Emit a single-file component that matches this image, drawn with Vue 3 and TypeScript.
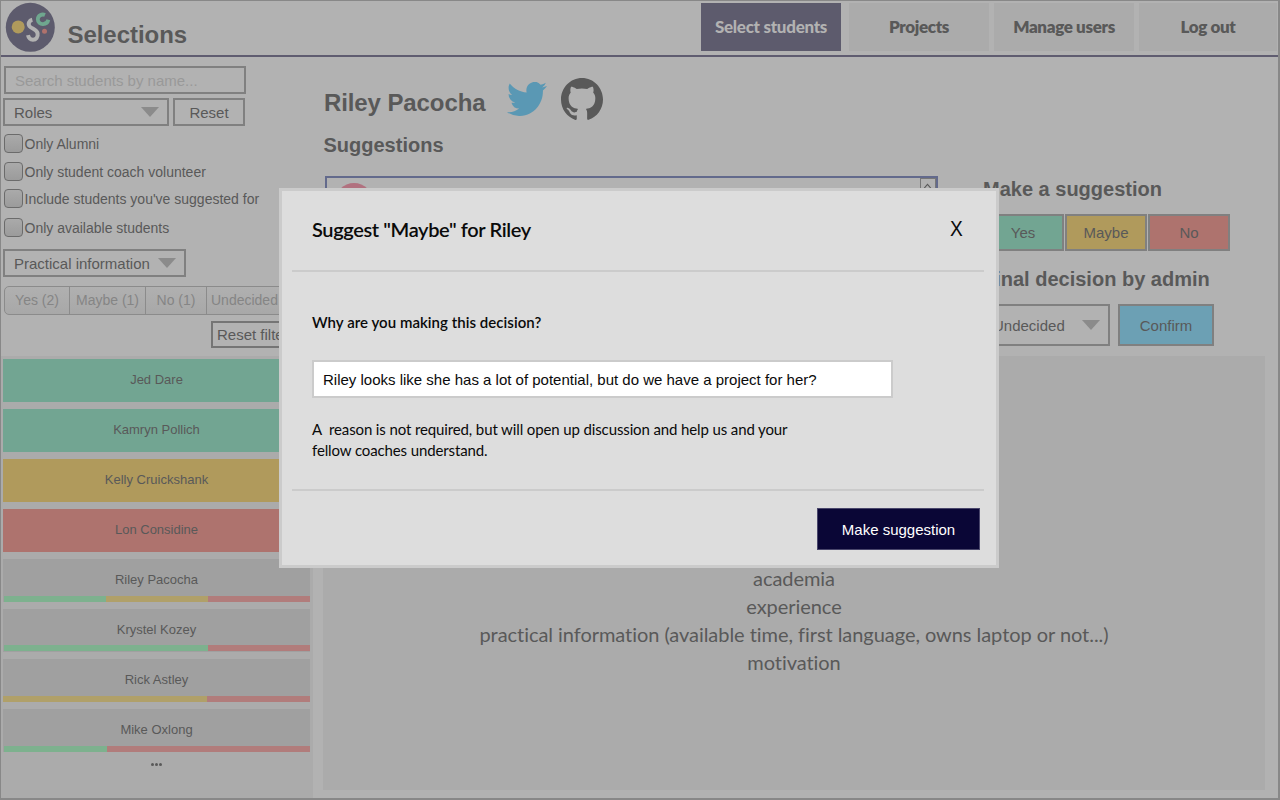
<script setup lang="ts">
interface Bar { tone: 'yes' | 'maybe' | 'no'; share: number }
interface Student { name: string; decision?: 'yes' | 'maybe' | 'no'; bars?: Bar[] }

const tabs = ['Select students', 'Projects', 'Manage users', 'Log out']
const filters = ['Only Alumni', 'Only student coach volunteer', "Include students you've suggested for", 'Only available students']
const counts = ['Yes (2)', 'Maybe (1)', 'No (1)', 'Undecided (4)']
const students: Student[] = [
  { name: 'Jed Dare', decision: 'yes' },
  { name: 'Kamryn Pollich', decision: 'yes' },
  { name: 'Kelly Cruickshank', decision: 'maybe' },
  { name: 'Lon Considine', decision: 'no' },
  { name: 'Riley Pacocha', bars: [{ tone: 'yes', share: 102 }, { tone: 'maybe', share: 102 }, { tone: 'no', share: 102 }] },
  { name: 'Krystel Kozey', bars: [{ tone: 'yes', share: 204 }, { tone: 'no', share: 102 }] },
  { name: 'Rick Astley', bars: [{ tone: 'maybe', share: 204 }, { tone: 'no', share: 103 }] },
  { name: 'Mike Oxlong', bars: [{ tone: 'yes', share: 103 }, { tone: 'no', share: 203 }] },
]
const details = ['academia', 'experience', 'practical information (available time, first language, owns laptop or not...)', 'motivation']
</script>

<template>
  <div class="screen">
    <header class="top">
      <svg class="logo" viewBox="0 0 50 50">
        <circle cx="25.300" cy="25.300" r="24.500" fill="#5d5b6d" />
        <circle cx="13.200" cy="24.900" r="6.500" fill="#b09a5c" />
        <circle cx="39.500" cy="29.200" r="2.500" fill="#b0726c" />
        <path d="M27.300 17.800c-3 .8-4.700 4-2.700 6.600 1.900 2.400 7.300 2.800 8 7 .6 3.700-1.600 6.300-4.700 6.300-2.800 0-4.300-1.700-4.900-4.500" fill="none" stroke="#b2b2b2" stroke-width="4" />
        <path d="M40 13c-3.200-1.400-7.200.6-7.200 4.300 0 2.900 2.500 5 5.300 4.800 2.700-.1 4.700-1.800 5.300-4.300" fill="none" stroke="#6fa78f" stroke-width="3.800" />
      </svg>
      <h1>Selections</h1>
      <nav>
        <button v-for="(tab, i) in tabs" :key="tab" :class="['tab', { active: i === 0 }]">{{ tab }}</button>
      </nav>
    </header>

    <div class="body">
      <aside>
        <section class="filters">
          <div class="search">Search students by name...</div>
          <div class="row">
            <div class="select roles"><span>Roles</span><i class="arrow" /></div>
            <div class="reset">Reset</div>
          </div>
          <div class="checks">
            <div v-for="f in filters" :key="f" class="check"><i class="box" /><span>{{ f }}</span></div>
          </div>
          <div class="select practical"><span>Practical information</span><i class="arrow" /></div>
          <div class="counts"><span v-for="c in counts" :key="c">{{ c }}</span></div>
          <div class="reset-filters">Reset filters</div>
        </section>
        <section class="list">
          <div v-for="s in students" :key="s.name" :class="['student', s.decision]">
            <span class="name">{{ s.name }}</span>
            <div v-if="s.bars" :class="['bars', { raised: s.name === 'Krystel Kozey' }]">
              <i v-for="b in s.bars" :key="b.tone" :class="b.tone" :style="{ width: b.share + 'px' }" />
            </div>
          </div>
          <div class="more"><i /><i /><i /></div>
        </section>
      </aside>

      <main>
        <div class="person">
          <h2>Riley Pacocha</h2>
          <svg class="twitter" viewBox="0 2.250 24 19.500" preserveAspectRatio="none"><path fill="#5a98b4" d="M23.953 4.570a10 10 0 01-2.825.775 4.958 4.958 0 002.163-2.723c-.951.555-2.005.959-3.127 1.184a4.920 4.920 0 00-8.384 4.482C7.690 8.095 4.067 6.130 1.640 3.162a4.822 4.822 0 00-.666 2.475c0 1.710.870 3.213 2.188 4.096a4.904 4.904 0 01-2.228-.616v.060a4.923 4.923 0 003.946 4.827 4.996 4.996 0 01-2.212.085 4.936 4.936 0 004.604 3.417 9.867 9.867 0 01-6.102 2.105c-.390 0-.779-.023-1.170-.067a13.995 13.995 0 007.557 2.209c9.053 0 13.998-7.496 13.998-13.985 0-.210 0-.420-.015-.630A9.935 9.935 0 0024 4.590z" /></svg>
          <svg class="github" viewBox="0 .297 24 23.450" preserveAspectRatio="none"><path fill="#595959" d="M12 .297c-6.630 0-12 5.373-12 12 0 5.303 3.438 9.800 8.205 11.385.600.113.820-.258.820-.577 0-.285-.010-1.040-.015-2.040-3.338.724-4.042-1.610-4.042-1.610C4.422 18.070 3.633 17.700 3.633 17.700c-1.087-.744.084-.729.084-.729 1.205.084 1.838 1.236 1.838 1.236 1.070 1.835 2.809 1.305 3.495.998.108-.776.417-1.305.760-1.605-2.665-.300-5.466-1.332-5.466-5.930 0-1.310.465-2.380 1.235-3.220-.135-.303-.540-1.523.105-3.176 0 0 1.005-.322 3.300 1.230.960-.267 1.980-.399 3-.405 1.020.006 2.040.138 3 .405 2.280-1.552 3.285-1.230 3.285-1.230.645 1.653.240 2.873.120 3.176.765.840 1.230 1.910 1.230 3.220 0 4.610-2.805 5.625-5.475 5.920.420.360.810 1.096.810 2.220 0 1.606-.015 2.896-.015 3.286 0 .315.210.690.825.570C20.565 22.092 24 17.592 24 12.297c0-6.627-5.373-12-12-12" /></svg>
        </div>
        <div class="columns">
          <div class="left">
            <h3>Suggestions</h3>
            <div class="suggestions">
              <i class="avatar" />
              <i class="scroll"><svg viewBox="0 0 16 14"><path d="M4 9.500 8 5l4 4.500" fill="none" stroke="#595959" stroke-width="1.300" /></svg></i>
            </div>
          </div>
          <div class="right">
            <h3>Make a suggestion</h3>
            <div class="votes"><button class="yes">Yes</button><button class="maybe">Maybe</button><button class="no">No</button></div>
            <h3 class="final">Final decision by admin</h3>
            <div class="decide">
              <div class="select undecided"><span>Undecided</span><i class="arrow" /></div>
              <button class="confirm">Confirm</button>
            </div>
          </div>
        </div>
        <div class="details"><p v-for="d in details" :key="d">{{ d }}</p></div>
      </main>
    </div>

    <div class="modal">
      <div class="modal-head"><h4>Suggest "Maybe" for Riley</h4><span class="close">X</span></div>
      <div class="modal-body">
        <p class="question">Why are you making this decision?</p>
        <div class="answer">Riley looks like she has a lot of potential, but do we have a project for her?</div>
        <p class="hint">A&nbsp; reason is not required, but will open up discussion and help us and your<br />fellow coaches understand.</p>
      </div>
      <div class="modal-foot"><button class="submit">Make suggestion</button></div>
    </div>
  </div>
</template>

<style>
body { margin: 0; overflow: hidden; }
</style>

<style scoped>
* { box-sizing: border-box; }
.screen { position: relative; width: 1280px; height: 800px; overflow: hidden; background: #b2b2b2; border: solid #888; border-width: 1px 2px 2px 1px; font-family: "Liberation Sans", Arial, sans-serif; font-size: 15px; color: #595959; white-space: nowrap; font-variant-ligatures: none; }
h1, h2, h3, h4, p { margin: 0; }
button { font: inherit; color: inherit; padding: 0; border: 0; border-radius: 0; font-variant-ligatures: none; }
i { display: block; }

.top { display: flex; height: 56px; border-bottom: 2px solid #5f5c70; }
.logo { width: 50px; height: 50px; margin: 1px 0 0 4px; }
h1 { margin: 20px 0 0 12.500px; font-size: 24px; line-height: 28px; letter-spacing: -.05px; }
nav { display: flex; margin: 2px 1px 0 auto; }
.tab { width: 140px; height: 48px; margin-right: 5px; background: #ababab; font: 800 17px/48px Lato, sans-serif; letter-spacing: -.35px; }
.tab:last-child { width: 138px; margin: 0; }
.tab.active { margin-right: 8px; background: #5d5b6d; color: #b2b2b2; font-weight: 900; letter-spacing: -.28px; }

.body { display: flex; height: 741px; }
aside { width: 312px; flex: none; }
.filters { height: 299px; padding: 9px 0 0 2px; overflow: hidden; }
.search { width: 242px; height: 28px; margin-left: 1px; border: 2px solid #808080; padding-left: 9px; line-height: 26px; color: #999; }
.row { display: flex; gap: 4px; margin-top: 4px; }
.select { display: flex; align-items: center; justify-content: space-between; border: 2px solid #808080; height: 28px; padding: 0 8px 0 9px; }
.roles { width: 166px; }
.reset { width: 72px; height: 28px; border: 2px solid #808080; text-align: center; line-height: 25px; }
.arrow { width: 18px; height: 10px; background: #8b8b8b; clip-path: polygon(0 0, 100% 0, 50% 100%); }
.checks { height: 115px; padding: 8px 0 0 1px; font-size: 14px; }
.check { display: flex; align-items: center; gap: 1.500px; height: 19px; margin-bottom: 9px; }
.check:nth-child(2) { margin-bottom: 8px; }
.check:nth-child(3) { margin-bottom: 10px; }
.box { width: 19px; height: 19px; border: 1.500px solid #6b6b6b; border-radius: 4px; background: linear-gradient(#aaa, #9b9b9b); }
.practical { width: 183px; margin-top: 8px; }
.counts { display: flex; width: 330px; height: 29px; margin: 9px 0 0 1px; border: 1px solid #8b8b8b; border-radius: 5px; color: #858585; font-size: 14px; line-height: 27px; text-align: center; background: linear-gradient(#b0b0b0, #a8a8a8); }
.counts span { border-right: 1px solid #8b8b8b; width: 65px; }
.counts span:nth-child(2) { width: 76px; }
.counts span:nth-child(3) { width: 61px; }
.counts span:nth-child(4) { border: 0; width: auto; padding-left: 4px; }
.reset-filters { width: 95px; height: 27px; margin: 6px 0 0 208px; border: 2px solid #757575; padding-left: 4px; line-height: 24px; }

.list { height: 442px; padding: 3px 3px 0 2px; background: #ababab; }
.student { display: flex; flex-direction: column; justify-content: space-between; height: 43px; margin-bottom: 7px; background: #a0a0a0; text-align: center; font-size: 13px; }
.name { height: 37px; padding-top: 1px; line-height: 40px; }
.bars { display: flex; height: 6px; justify-content: flex-end; }
.bars.raised { margin: -1px 0 1px; }
.student.yes, .votes .yes { background: #72a592; }
.student.maybe, .votes .maybe { background: #b09a5c; }
.student.no, .votes .no { background: #ae736e; }
.bars .yes { background: #7db18e; }
.bars .maybe { background: #b0a069; }
.bars .no { background: #b17c7b; }
.more { display: flex; justify-content: center; gap: 1px; margin-top: 11px; }
.more i { width: 3.300px; height: 3.300px; background: #595959; border-radius: 50%; }

main { width: 954px; padding: 21px 0 0 10px; flex: none; }
.person { display: flex; height: 42px; padding-left: 1px; }
h2 { width: 161px; margin: 11px 22px 0 0; font-size: 24px; line-height: 28px; letter-spacing: -.1px; }
.twitter { width: 40px; height: 34px; margin-top: 4px; }
.github { width: 42px; height: 42px; margin-left: 14px; }
.columns { display: flex; height: 236px; }
.left { width: 659px; padding-top: 13px; }
h3 { padding-left: 1px; font-size: 20px; line-height: 24px; }
.left h3 { padding-left: .5px; }
.suggestions { display: flex; justify-content: space-between; width: 613px; height: 150px; margin: 19px 0 0 2px; border: 2px solid #636a8c; }
.avatar { width: 38px; height: 38px; margin: 5px 0 0 8px; border-radius: 50%; background: #b1717f; }
.scroll { width: 16px; height: 16px; border: 1.500px solid #777; }
.scroll svg { display: block; width: 13px; height: 14px; }
.right { padding-top: 57px; }
.votes { display: flex; gap: 1px; margin-top: 13px; }
.votes button { width: 82px; height: 37px; border: 2px solid #808080; }
.final { margin-top: 16px; }
.decide { display: flex; gap: 8px; margin-top: 13px; }
.undecided { width: 128px; height: 42px; padding: 0 8px 0 9px; }
.confirm { width: 96px; height: 42px; background: #6ca0b4; border: 2px solid #808080; }
.details { width: 942px; height: 434px; padding-top: 208px; background: #ababab; text-align: center; font: 20px/28px Lato, sans-serif; letter-spacing: -.05px; font-variant-ligatures: none; }

.modal { position: absolute; left: 278px; top: 187px; width: 720px; height: 380px; padding: 0 12px 0 10px; border: 3px solid #cbcbcb; background: #ddd; color: #0a0a0a; }
.modal-head { display: flex; justify-content: space-between; height: 81px; padding: 0 20px; border-bottom: 2px solid #cbcbcb; }
h4 { margin-top: 26px; font: 600 20px/24px Lato, sans-serif; letter-spacing: -.38px; }
.close { margin-top: 26px; font-size: 22px; line-height: 24px; transform: scaleX(.87); }
.modal-body { height: 219px; padding: 40px 20px 0; border-bottom: 2px solid #cbcbcb; font: 15px/21px Lato, sans-serif; font-variant-ligatures: none; }
.question { font-weight: 600; letter-spacing: .04px; }
.answer { width: 581px; height: 38px; margin-top: 27px; padding-left: 9px; border: 2px solid #cbcbcb; background: #fff; font: 15px/35px "Liberation Sans", Arial, sans-serif; }
.hint { margin-top: 21px; letter-spacing: -.12px; }
.modal-foot { display: flex; justify-content: flex-end; padding: 17px 4px 0 0; }
.submit { width: 163px; height: 42px; background: #0a0636; color: #fff; border: 1px solid #49466b; }
</style>
